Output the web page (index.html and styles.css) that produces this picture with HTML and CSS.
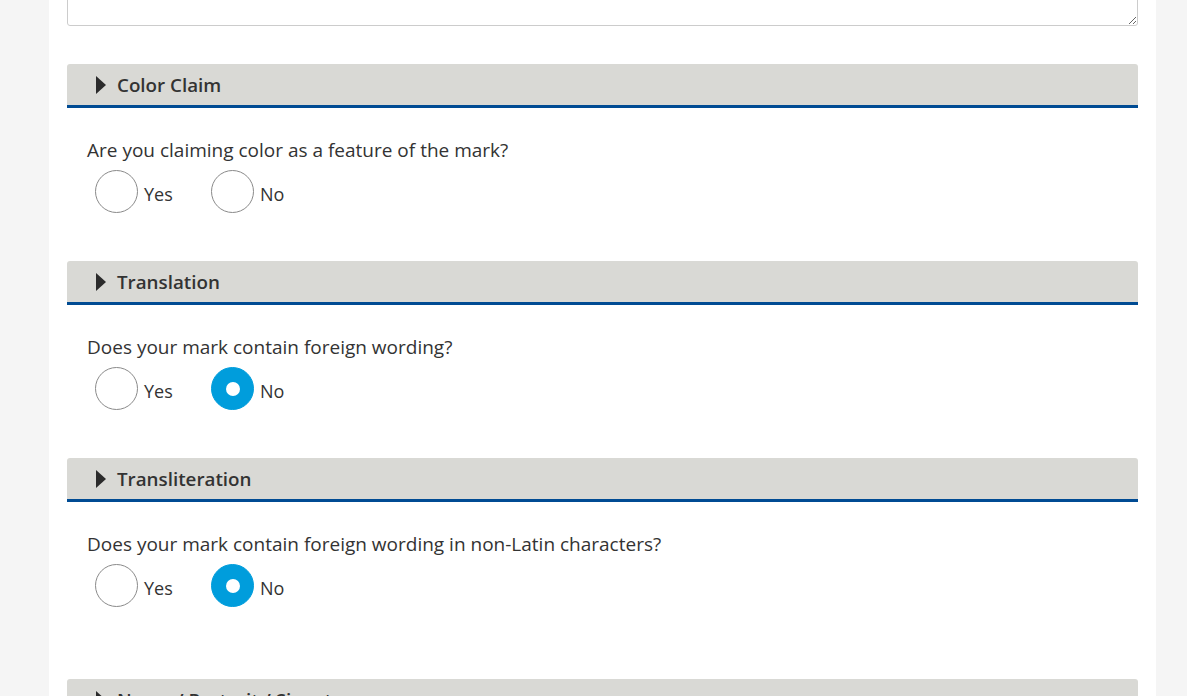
FILE: index.html
```html
<!DOCTYPE html>
<html lang="en">
<head>
<meta charset="utf-8">
<title>Mark details</title>
<link rel="stylesheet" href="styles.css">
</head>
<body>
<main class="page">
  <div class="textarea-wrap"><textarea class="textarea" aria-label="Description"></textarea></div>

  <section class="section">
    <h2 class="section-head"><span class="caret"></span>Color Claim</h2>
    <div class="section-body">
      <p class="question">Are you claiming color as a feature of the mark?</p>
      <div class="options">
        <label class="option"><span class="radio"></span><span class="opt-label">Yes</span></label>
        <label class="option"><span class="radio"></span><span class="opt-label">No</span></label>
      </div>
    </div>
  </section>

  <section class="section">
    <h2 class="section-head"><span class="caret"></span>Translation</h2>
    <div class="section-body">
      <p class="question">Does your mark contain foreign wording?</p>
      <div class="options">
        <label class="option"><span class="radio"></span><span class="opt-label">Yes</span></label>
        <label class="option"><span class="radio checked"></span><span class="opt-label">No</span></label>
      </div>
    </div>
  </section>

  <section class="section section-last">
    <h2 class="section-head"><span class="caret"></span>Transliteration</h2>
    <div class="section-body">
      <p class="question">Does your mark contain foreign wording in non-Latin characters?</p>
      <div class="options">
        <label class="option"><span class="radio"></span><span class="opt-label">Yes</span></label>
        <label class="option"><span class="radio checked"></span><span class="opt-label">No</span></label>
      </div>
    </div>
  </section>

  <section class="section">
    <h2 class="section-head"><span class="caret"></span>Name / Portrait / Signature</h2>
  </section>
</main>
</body>
</html>
```

FILE: styles.css
```css
html, body {
  margin: 0;
  padding: 0;
  background: #f5f5f5;
  height: 100%;
  overflow: hidden;
}

body {
  font-family: "Open Sans", "Noto Sans", sans-serif;
  color: #333333;
}

.page {
  background: #ffffff;
  margin-left: 49px;
  width: 1107px;
  padding: 0 18px;
  box-sizing: border-box;
  min-height: 100%;
}

.textarea-wrap {
  height: 26px;
  position: relative;
  overflow: hidden;
}

.textarea {
  display: block;
  width: 100%;
  height: 60px;
  margin-top: -34px;
  box-sizing: border-box;
  border: 1px solid #cccccc;
  border-radius: 3px;
  resize: vertical;
  font: inherit;
}

.section {
  margin-top: 38px;
}

.section + .section {
  margin-top: 0;
}

.section-head {
  margin: 0;
  height: 40px;
  padding-top: 1px;
  background: #d9d9d5;
  border-bottom: 3px solid #004b93;
  border-radius: 3px 3px 0 0;
  display: flex;
  align-items: center;
  padding-left: 29px;
  font-size: 18.8px;
  font-weight: 600;
  color: #333333;
}

.caret {
  width: 0;
  height: 0;
  border-top: 9px solid transparent;
  border-bottom: 9px solid transparent;
  border-left: 10px solid #2b2b2b;
  margin-right: 11px;
}

.section-body {
  padding: 29px 20px 48px;
}

.section-last .section-body {
  padding-bottom: 72px;
}

.question {
  margin: 0;
  font-size: 19px;
  line-height: 26px;
  color: #333333;
}

.options {
  display: flex;
  margin-top: 7px;
  padding-left: 8px;
}

.option {
  display: flex;
  align-items: center;
  width: 116px;
  height: 43px;
  font-size: 18px;
  color: #333333;
}

.radio {
  width: 43px;
  height: 43px;
  box-sizing: border-box;
  border: 1px solid #8a8a8a;
  border-radius: 50%;
  background: #ffffff;
  margin-right: 6px;
  flex: none;
  display: flex;
  align-items: center;
  justify-content: center;
}

.radio.checked {
  background: #009ddc;
  border-color: #009ddc;
}

.radio.checked::after {
  content: "";
  width: 14px;
  height: 14px;
  border-radius: 50%;
  background: #ffffff;
}

.opt-label {
  padding-top: 4px;
}
```
